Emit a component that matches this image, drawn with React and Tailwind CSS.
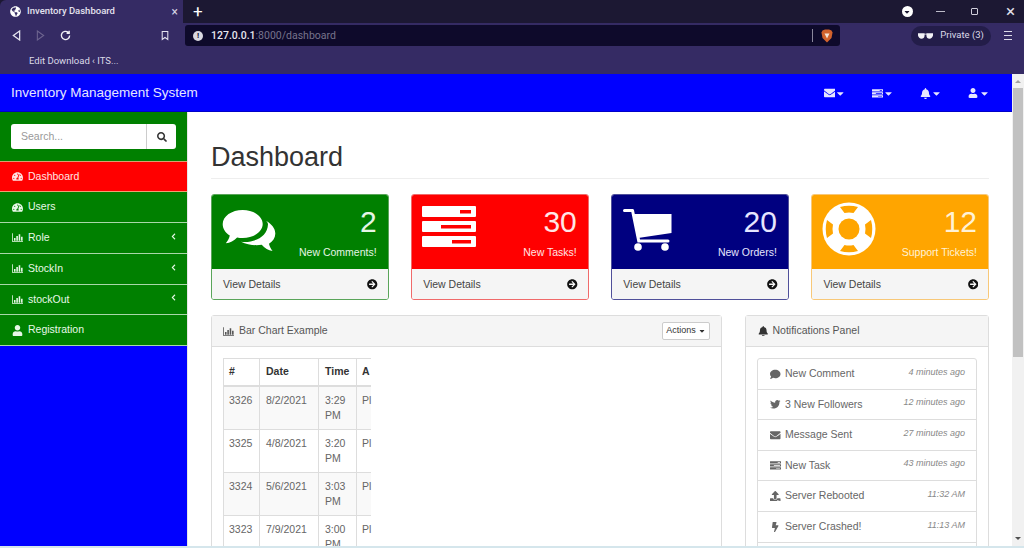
import React from "react";
import {
  FaArrowCircleRight,
  FaBell,
  FaBolt,
  FaCaretDown,
  FaChevronLeft,
  FaComment,
  FaEnvelope,
  FaGlobeAmericas,
  FaSearch,
  FaTachometerAlt,
  FaTwitter,
  FaUpload,
  FaUser,
} from "react-icons/fa";

function TasksIcon({ className }) {
  return (
    <svg viewBox="0 0 54 42" className={className} fill="currentColor" fillRule="evenodd">
      <path d="M1 0h52a1 1 0 0 1 1 1v9a1 1 0 0 1-1 1H1a1 1 0 0 1-1-1V1a1 1 0 0 1 1-1zM38 4v3.500h11V4z" />
      <path d="M1 15h52a1 1 0 0 1 1 1v9a1 1 0 0 1-1 1H1a1 1 0 0 1-1-1v-9a1 1 0 0 1 1-1zM19 19v3.500h30V19z" />
      <path d="M1 30h52a1 1 0 0 1 1 1v9a1 1 0 0 1-1 1H1a1 1 0 0 1-1-1v-9a1 1 0 0 1 1-1zM30 34v3.500h19V34z" />
    </svg>
  );
}

function BarIcon({ className }) {
  return (
    <svg viewBox="0 0 14 11" className={className} fill="currentColor">
      <path d="M0 0h1v10h13v1H0z" />
      <path d="M2.500 6h2v3.500h-2zM5.500 3.500h2v6h-2zM8.500 1.500h2v8h-2zM11.500 4.500h2v5h-2z" />
    </svg>
  );
}

function CommentsIcon({ className }) {
  return (
    <svg viewBox="6 8 54 46" className={className} fill="currentColor">
      <path d="M26.700 10C37.800 10 46.700 16.300 46.700 24S37.800 38 26.700 38c-2 0-3.800-.2-5.600-.6C18 40.500 14 42.800 9.800 43.300c1.800-2 3.300-4.600 4-7.700C9.400 33 6.700 28.700 6.700 24 6.700 16.300 15.600 10 26.700 10z" />
      <path d="M50 21c6 2.800 9.500 8 9.300 12.800-.1 4.200-2.500 7.600-6.300 10 .6 2.700 1.800 5.200 3.500 7.200-4-.6-8-2.900-10.800-6.300-7 1.300-14.500-.2-20.700-3 14 1.500 26.500-5.200 27-17.500 0-1.100-.7-2.200-2-3.200z" />
    </svg>
  );
}

function CartIcon({ className }) {
  return (
    <svg viewBox="6 8 54 46" className={className} fill="currentColor">
      <path d="M18 14h37.500v19L22 38z" />
      <path d="M8.500 9h8a1.500 1.500 0 0 1 1.500 1.200L24 39.500h28a1.500 1.500 0 0 1 0 3H21.500L15.300 12H8.500a1.500 1.500 0 0 1 0-3z" />
      <circle cx="22" cy="47" r="3.800" />
      <circle cx="49" cy="47" r="3.800" />
    </svg>
  );
}

function RingIcon({ className, cut }) {
  const seg = "M-9-22Q0-24.500 9-22L4.500-16Q0-17-4.500-16Z";
  return (
    <svg viewBox="-27 -27 54 54" className={className}>
      <circle r="26.500" fill="currentColor" />
      <circle r="10.500" fill={cut} />
      {[0, 90, 180, 270].map((deg) => (
        <path key={deg} d={seg} fill={cut} transform={`rotate(${deg})`} />
      ))}
    </svg>
  );
}

function BrowserChrome() {
  return (
    <div className="flex flex-col shrink-0 h-[74px] font-['Roboto',sans-serif] text-white">
      {/* tabs */}
      <div className="flex items-center h-[23px] bg-[#1c1833]">
        <div className="flex items-center w-[183px] h-full pl-[10px] pr-[5px] bg-[#352b64] rounded-tl-md">
          <FaGlobeAmericas className="text-[11px] text-white" />
          <span className="ml-[6px] text-[9.5px] font-medium text-[#e4e2ee]">Inventory Dashboard</span>
          <span className="ml-auto text-[12px] leading-none text-[#d8d6e6]">×</span>
        </div>
        <span className="ml-[10px] text-[17px] leading-none">+</span>
        <div className="ml-auto flex items-center">
          <span className="flex items-center justify-center w-[11px] h-[11px] rounded-full bg-white mr-[23px]">
            <FaCaretDown className="text-[8px] text-[#1c1833]" />
          </span>
          <span className="w-[9px] h-px bg-[#bdbbc9] mr-[26px]" />
          <span className="w-[7px] h-[7px] border border-[#d0cedb] rounded-[1px] mr-[28px]" />
          <span className="text-[17px] leading-none text-[#e2e0ea] mr-[9px]">×</span>
        </div>
      </div>
      {/* toolbar */}
      <div className="flex items-center h-[25px] bg-[#352b64]">
        <div className="flex items-center w-[185px] pl-[12px]">
          <svg viewBox="0 0 10 12" className="w-[9px] h-[11px]" fill="none" stroke="#e6e4f0" strokeWidth="1.4">
            <path d="M8.500 1 1.500 6l7 5z" />
          </svg>
          <svg viewBox="0 0 10 12" className="w-[9px] h-[11px] ml-[15px]" fill="none" stroke="#6d648f" strokeWidth="1.2">
            <path d="M1.500 1 8.500 6l-7 5z" />
          </svg>
          <svg viewBox="0 0 12 12" className="w-[11px] h-[11px] ml-[15px]" fill="none" stroke="#f0eff5" strokeWidth="1.5">
            <path d="M10.500 6a4.500 4.500 0 1 1-1.400-3.300M10 .8v2.700H7.200" />
          </svg>
          <svg viewBox="0 0 10 12" className="w-[8px] h-[11px] ml-[90px]" fill="none" stroke="#e6e4f0" strokeWidth="1.3">
            <path d="M1.500 1h7v10L5 8.500 1.500 11z" />
          </svg>
        </div>
        <div className="flex items-center w-[655px] h-[21px] px-[8px] bg-[#0e0a2b] rounded-[3px] text-[10.5px]">
          <span className="flex items-center justify-center w-[10px] h-[10px] rounded-full bg-[#d9d8e0] text-[8px] font-bold leading-none text-[#0e0a2b]">!</span>
          <span className="ml-[8px] font-medium text-[#e8e7ef]">127.0.0.1</span>
          <span className="text-[#77748c]">:8000/dashboard</span>
          <span className="ml-auto w-px h-[13px] bg-[#8a879c] mr-[8px]" />
          <svg viewBox="0 0 12 14" className="w-[12px] h-[14px] mr-[-1px]">
            <path d="M1.500 1.500 4 .5h4l2.500 1 1 2L10.500 9 6 13.500 1.500 9 .5 3.500z" fill="#d2622c" />
            <path d="M3.500 4.500h5L6 9.500z" fill="#f4e4d8" />
          </svg>
        </div>
        <div className="flex items-center justify-center ml-[71px] w-[80px] h-[20px] rounded-[10px] bg-[#231d49] text-[9.5px] text-[#dcdae8]">
          <svg viewBox="0 0 16 6" className="w-[15px] h-[6px] mr-[7px]" fill="#f2f2f6">
            <path d="M0 0h7v2.500C7 5 5.500 6 3.800 6 1.800 6 .5 4.500 0 2.500zM9 0h7v2.500C15.500 4.500 14.200 6 12.200 6 10.500 6 9 5 9 2.500zM7 .5h2v1H7z" />
          </svg>
          Private (3)
        </div>
        <div className="flex flex-col gap-[3px] ml-[13px]">
          <span className="w-[8px] h-px bg-[#dcdae8]" />
          <span className="w-[8px] h-px bg-[#dcdae8]" />
          <span className="w-[8px] h-px bg-[#dcdae8]" />
        </div>
      </div>
      {/* bookmarks */}
      <div className="flex items-center h-[26px] pl-[29px] bg-[#352b64] text-[9.5px] text-[#dcdae8]">
        Edit Download ‹ ITS...
      </div>
    </div>
  );
}

function Navbar() {
  const items = [
    <FaEnvelope key="m" className="text-[12px]" />,
    <TasksIcon key="t" className="w-[11px] h-[9px]" />,
    <FaBell key="b" className="text-[11px]" />,
    <FaUser key="u" className="text-[10px]" />,
  ];
  return (
    <div className="flex items-center shrink-0 h-[38px] pt-[1px] pl-[11px] pr-[22px] bg-[#0000ff] border-b border-[#0000c8]">
      <span className="text-[13.5px] text-[#e6e6ff]">Inventory Management System</span>
      <div className="ml-auto flex gap-[26px] text-[#e6e6ff]">
        {items.map((icon, i) => (
          <div key={i} className="flex items-center justify-between w-[22px] h-[14px]">
            {icon}
            <FaCaretDown className="text-[11px]" />
          </div>
        ))}
      </div>
    </div>
  );
}

const sideLinks = [
  { label: "Dashboard", icon: FaTachometerAlt, active: true },
  { label: "Users", icon: FaTachometerAlt },
  { label: "Role", icon: BarIcon, bars: true, arrow: true },
  { label: "StockIn", icon: BarIcon, bars: true, arrow: true },
  { label: "stockOut", icon: BarIcon, bars: true, arrow: true },
  { label: "Registration", icon: FaUser },
];

function Sidebar() {
  return (
    <div className="flex flex-col shrink-0 w-[188px] bg-[#0000ff] border-r border-[#e7e7e7]">
      <div className="flex h-[49.5px] pt-[12px] pl-[11px] pr-[11px] bg-[#008000] border-b border-[#d8a070]">
        <div className="flex w-full h-[25px] bg-white rounded-[3px]">
          <div className="flex items-center flex-1 pl-[10px] text-[10.5px] text-[#999] border-r border-[#ccc]">Search...</div>
          <div className="flex items-center justify-center w-[29px] pl-[1px]">
            <FaSearch className="text-[10px] text-[#333]" />
          </div>
        </div>
      </div>
      {sideLinks.map((link) => {
        const Icon = link.icon;
        return (
          <div
            key={link.label}
            className={
              link.active
                ? "flex items-center h-[30.75px] pl-[12px] pr-[10px] bg-[#ff0000] border-b border-[#f0a070] text-[10.5px] text-[#ffe4e4]"
                : "flex items-center h-[30.75px] pl-[12px] pr-[10px] bg-[#008000] border-b border-[#a8d8a8] text-[10.5px] text-[#e8f8e8]"
            }
          >
            <Icon className={link.bars ? "w-[11px] h-[9px] shrink-0" : "w-[11px] text-[11px] shrink-0"} />
            <span className="ml-[5px]">{link.label}</span>
            {link.arrow && <FaChevronLeft className="ml-auto mb-[3px] text-[7px]" />}
          </div>
        );
      })}
    </div>
  );
}

const cards = [
  { count: "2", label: "New Comments!", icon: <CommentsIcon className="w-[54px] h-[46px] mt-[3px]" />, head: "bg-[#008000]", border: "border-[#5aa55a]", text: "text-[#e6f5e6]" },
  { count: "30", label: "New Tasks!", icon: <TasksIcon className="w-[54px] h-[42px] mt-[1px]" />, head: "bg-[#ff0000]", border: "border-[#f06a6a]", text: "text-[#ffe6e6]" },
  { count: "20", label: "New Orders!", icon: <CartIcon className="w-[54px] h-[46px] mt-[3px]" />, head: "bg-[#000080]", border: "border-[#50509a]", text: "text-[#e6e6ff]" },
  { count: "12", label: "Support Tickets!", icon: <RingIcon cut="#ffa500" className="w-[54px] h-[54px] -mt-[3px]" />, head: "bg-[#ffa500]", border: "border-[#f8c878]", text: "text-[#fff2d6]" },
];

function StatCard({ card }) {
  return (
    <div className={`flex-1 rounded-[3px] border overflow-hidden ${card.border}`}>
      <div className={`flex justify-between h-[74px] pt-[10px] pl-[10px] pr-[11px] ${card.head} ${card.text}`}>
        <div className="text-white">{card.icon}</div>
        <div className="text-right">
          <div className="text-[30px] leading-[33px]">{card.count}</div>
          <div className="mt-[7px] text-[10.5px] leading-[15px]">{card.label}</div>
        </div>
      </div>
      <div className="flex items-center justify-between h-[31px] pl-[11px] pr-[10px] bg-[#f5f5f5] text-[10.5px] text-[#444]">
        <span>View Details</span>
        <FaArrowCircleRight className="text-[10.5px] text-[#111]" />
      </div>
    </div>
  );
}

const orders = [
  ["3326", "8/2/2021", "3:29 PM"],
  ["3325", "4/8/2021", "3:20 PM"],
  ["3324", "5/6/2021", "3:03 PM"],
  ["3323", "7/9/2021", "3:00 PM"],
];

function ChartPanel() {
  return (
    <div className="w-[511px] h-[300px] border border-[#ddd] rounded-t-[3px]">
      <div className="flex items-center justify-between h-[31px] pl-[11px] pr-[11px] bg-[#f5f5f5] border-b border-[#ddd] text-[10.5px] text-[#555]">
        <div className="flex items-center gap-[5px]">
          <BarIcon className="w-[11px] h-[9px]" />
          Bar Chart Example
        </div>
        <div className="flex items-center justify-center gap-[2px] w-[48px] h-[18px] bg-white border border-[#ccc] rounded-[2px] text-[9px] text-[#333]">
          Actions
          <FaCaretDown className="text-[8px]" />
        </div>
      </div>
      <div className="pt-[11px] pl-[11px]">
        <table className="w-[147px] table-fixed border-collapse text-[10.5px] leading-[15px] text-[#666]">
          <colgroup>
            <col className="w-[36px]" />
            <col className="w-[59px]" />
            <col className="w-[38px]" />
            <col className="w-[14px]" />
          </colgroup>
          <thead>
            <tr className="font-bold text-[#333] text-left">
              <th className="pt-[5px] pb-[6px] pl-[5px] pr-[6px] border border-[#ddd] border-b-2">#</th>
              <th className="pt-[5px] pb-[6px] px-[6px] border border-[#ddd] border-b-2">Date</th>
              <th className="pt-[5px] pb-[6px] px-[6px] border border-[#ddd] border-b-2">Time</th>
              <th className="pt-[5px] pb-[6px] pl-[5px] pr-0 border-y border-[#ddd] border-b-2">A</th>
            </tr>
          </thead>
          <tbody>
            {orders.map((row, i) => (
              <tr key={row[0]} className={i % 2 === 0 ? "bg-[#f9f9f9]" : "bg-white"}>
                <td className="py-[6px] pl-[5px] pr-[6px] align-top border border-[#ddd]">{row[0]}</td>
                <td className="p-[6px] align-top border border-[#ddd]">{row[1]}</td>
                <td className="p-[6px] align-top border border-[#ddd]">{row[2]}</td>
                <td className="py-[6px] pl-[5px] pr-0 align-top border-y border-[#ddd]">Pl</td>
              </tr>
            ))}
          </tbody>
        </table>
      </div>
    </div>
  );
}

const notes = [
  { icon: FaComment, text: "New Comment", time: "4 minutes ago" },
  { icon: FaTwitter, text: "3 New Followers", time: "12 minutes ago" },
  { icon: FaEnvelope, text: "Message Sent", time: "27 minutes ago" },
  { icon: TasksIcon, text: "New Task", time: "43 minutes ago", small: true },
  { icon: FaUpload, text: "Server Rebooted", time: "11:32 AM" },
  { icon: FaBolt, text: "Server Crashed!", time: "11:13 AM" },
];

function NotificationsPanel() {
  return (
    <div className="w-[244px] h-[300px] border border-[#ddd] rounded-t-[3px]">
      <div className="flex items-center gap-[4px] h-[31px] pl-[12px] bg-[#f5f5f5] border-b border-[#ddd] text-[10.5px] text-[#555]">
        <FaBell className="text-[10.5px] text-[#333]" />
        Notifications Panel
      </div>
      <div className="pt-[11px] pl-[11px] pr-[11px]">
        {/* list runs on past the fold */}
        <div className="h-[240px] border border-[#ddd] rounded-[3px]">
          {notes.map((note) => {
            const Icon = note.icon;
            return (
              <div key={note.text} className="flex items-center h-[30.6px] pl-[12px] pr-[11px] border-b border-[#ddd] text-[10.5px] text-[#666]">
                <span className="flex w-[15px] shrink-0">
                  <Icon className={note.small ? "w-[11px] h-[9px]" : "text-[10.5px]"} />
                </span>
                <span>{note.text}</span>
                <span className="ml-auto mb-[3px] text-[9px] italic text-[#888]">{note.time}</span>
              </div>
            );
          })}
        </div>
      </div>
    </div>
  );
}

function Scrollbar() {
  return (
    <div className="flex flex-col items-center shrink-0 w-[12px] bg-[#f1f1f1]">
      <span className="mt-[6px] w-0 h-0 border-x-[3px] border-x-transparent border-b-[3px] border-b-[#a0a0a0]" />
      <span className="mt-[5px] w-[10px] h-[269px] bg-[#c1c1c1]" />
      <span className="mt-auto mb-[6px] w-0 h-0 border-x-[3px] border-x-transparent border-t-[3px] border-t-[#505050]" />
    </div>
  );
}

export default function App() {
  return (
    <div className="flex flex-col w-[1024px] h-[548px] overflow-hidden bg-white font-['Liberation_Sans',sans-serif]">
      <BrowserChrome />
      <div className="flex flex-1 min-h-0">
        <div className="flex flex-col flex-1 min-w-0">
          <Navbar />
          <div className="flex flex-1 min-h-0">
            <Sidebar />
            <div className="flex-1 min-w-0 pl-[23px] pr-[23px] overflow-hidden">
              <h1 className="mt-[30px] pb-[6px] mb-[15px] border-b border-[#eee] text-[27px] leading-[30px] text-[#333]">Dashboard</h1>
              <div className="flex gap-[22.5px] h-[106px] mb-[15px]">
                {cards.map((card) => (
                  <StatCard key={card.label} card={card} />
                ))}
              </div>
              <div className="flex gap-[23px]">
                <ChartPanel />
                <NotificationsPanel />
              </div>
            </div>
          </div>
        </div>
        <Scrollbar />
      </div>
      <div className="shrink-0 h-[2px] bg-[#d5e6ec]" />
    </div>
  );
}
